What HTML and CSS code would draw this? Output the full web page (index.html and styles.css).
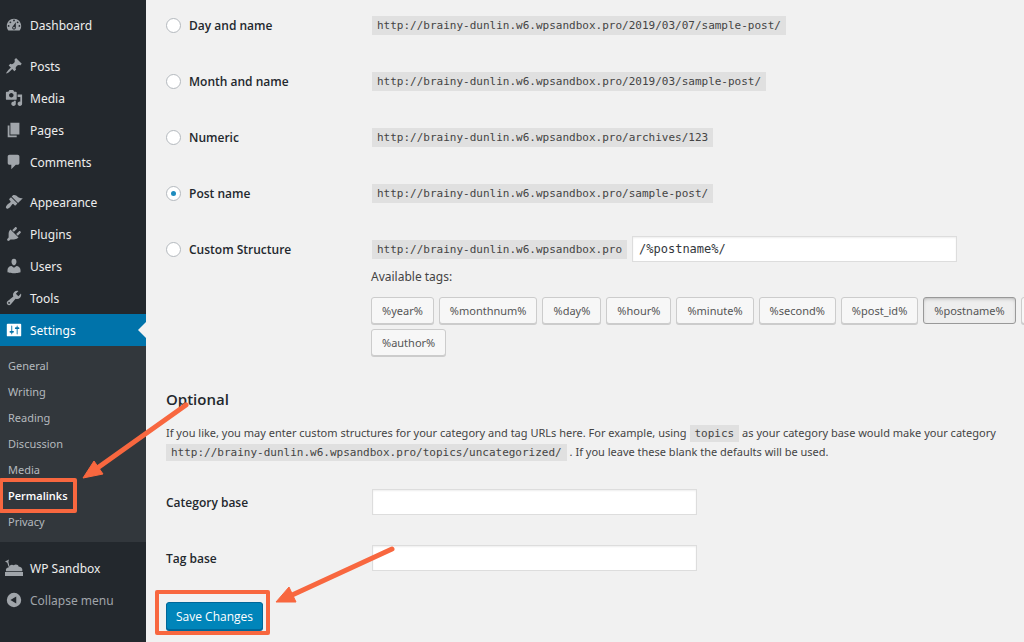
FILE: index.html
```html
<!DOCTYPE html>
<html lang="en">
<head>
<meta charset="utf-8">
<meta name="viewport" content="width=device-width, initial-scale=1">
<title>Permalink Settings</title>
<link rel="stylesheet" href="styles.css">
</head>
<body>
<div class="page">
  <nav class="sidebar" aria-label="Main menu">
    <ul class="menu">
      <li><a class="item" href="#"><svg class="icon" viewBox="0 0 20 20"><path fill-rule="evenodd" d="M3.76 16h12.48c1.1-1.37 1.76-3.11 1.76-5 0-4.42-3.58-8-8-8s-8 3.58-8 8c0 1.89.66 3.63 1.76 5zM10 4c.55 0 1 .45 1 1s-.45 1-1 1-1-.45-1-1 .45-1 1-1zM6 6c.55 0 1 .45 1 1s-.45 1-1 1-1-.45-1-1 .45-1 1-1zm8 0c.55 0 1 .45 1 1s-.45 1-1 1-1-.45-1-1 .45-1 1-1zm-5.37 5.55L12 7v6c0 1.1-.9 2-2 2s-2-.9-2-2c0-.57.24-1.08.63-1.45zM4 10c.55 0 1 .45 1 1s-.45 1-1 1-1-.45-1-1 .45-1 1-1zm12 0c.55 0 1 .45 1 1s-.45 1-1 1-1-.45-1-1 .45-1 1-1zm-5 3c0-.55-.45-1-1-1s-1 .45-1 1 .45 1 1 1 1-.45 1-1z"/></svg>Dashboard</a></li>
    </ul>
    <ul class="menu">
      <li><a class="item" href="#"><svg class="icon" viewBox="0 0 20 20"><path d="M10.44 3.02l1.82-1.82 6.36 6.35-1.83 1.82c-1.05-.68-2.48-.57-3.41.36l-.75.75c-.92.93-1.04 2.35-.35 3.41l-1.83 1.82-2.41-2.41-2.8 2.79c-.42.42-3.38 2.71-3.8 2.29s1.86-3.39 2.28-3.81l2.79-2.79L4.1 9.36l1.83-1.82c1.05.69 2.48.57 3.4-.36l.75-.75c.93-.92 1.05-2.35.36-3.41z"/></svg>Posts</a></li>
      <li><a class="item" href="#"><svg class="icon" viewBox="0 0 20 20"><path fill-rule="evenodd" d="M13 11V4c0-.55-.45-1-1-1h-1.67L9 1H5L3.67 3H2c-.55 0-1 .45-1 1v7c0 .55.45 1 1 1h10c.55 0 1-.45 1-1zM7 4.5c1.38 0 2.5 1.12 2.5 2.5S8.38 9.5 7 9.5 4.5 8.38 4.5 7 5.62 4.5 7 4.5zM14 6h5v10.5c0 1.38-1.12 2.5-2.5 2.5S14 17.88 14 16.5s1.12-2.5 2.5-2.5c.17 0 .34.02.5.05V9h-3V6zm-4 8.05V13h2v3.5c0 1.38-1.12 2.5-2.5 2.5S7 17.88 7 16.5 8.12 14 9.5 14c.17 0 .34.02.5.05z"/></svg>Media</a></li>
      <li><a class="item" href="#"><svg class="icon" viewBox="0 0 20 20"><path d="M6 15V2h10v13H6zm-1 1h8v2H3V5h2v11z"/></svg>Pages</a></li>
      <li><a class="item" href="#"><svg class="icon" viewBox="0 0 20 20"><path d="M5 2h9c1.1 0 2 .9 2 2v7c0 1.1-.9 2-2 2h-2l-5 5v-5H5c-1.1 0-2-.9-2-2V4c0-1.1.9-2 2-2z"/></svg>Comments</a></li>
    </ul>
    <ul class="menu">
      <li><a class="item" href="#"><svg class="icon" viewBox="0 0 20 20"><path d="M14.48 11.06L7.41 3.99l1.5-1.5c.5-.56 2.3-.47 3.51.32 1.21.8 1.43 1.28 2.91 2.1 1.18.64 2.45 1.26 4.45.85zm-.71.71L6.7 4.7 4.93 6.47c-.39.39-.39 1.02 0 1.41l1.06 1.06c.39.39.39 1.03 0 1.42-.6.6-1.43 1.11-2.21 1.69-.35.26-.7.53-1.01.84C1.43 14.23.4 16.08 1.4 17.07c.99 1 2.84-.03 4.18-1.36.31-.31.58-.66.85-1.02.57-.78 1.08-1.61 1.69-2.21.39-.39 1.02-.39 1.41 0l1.06 1.06c.39.39 1.02.39 1.41 0z"/></svg>Appearance</a></li>
      <li><a class="item" href="#"><svg class="icon" viewBox="0 0 20 20"><path d="M13.11 4.36L9.87 7.6 8 5.73l3.24-3.24c.35-.34 1.05-.2 1.56.32.52.51.66 1.21.31 1.55zm-8 1.77l.91-1.12 9.01 9.01-1.19.84c-.71.71-2.63 1.16-3.82 1.16H6.14L4.9 17.26c-.59.59-1.54.59-2.12 0-.59-.58-.59-1.53 0-2.12l1.24-1.24v-3.88c0-1.13.4-3.19 1.09-3.89zm7.26 3.97l3.24-3.24c.34-.35 1.04-.21 1.55.31.52.51.66 1.21.31 1.55l-3.24 3.25z"/></svg>Plugins</a></li>
      <li><a class="item" href="#"><svg class="icon" viewBox="0 0 20 20"><path d="M10 9.25c-2.27 0-2.73-3.44-2.73-3.44C7 4.02 7.82 2 9.97 2c2.16 0 2.98 2.02 2.71 3.81 0 0-.41 3.44-2.68 3.44zm0 2.57L12.72 10c2.39 0 4.52 2.33 4.52 4.53v2.49s-3.65 1.13-7.24 1.13c-3.65 0-7.24-1.13-7.24-1.13v-2.49c0-2.25 1.94-4.48 4.47-4.48z"/></svg>Users</a></li>
      <li><a class="item" href="#"><svg class="icon" viewBox="0 0 20 20"><path fill-rule="evenodd" d="M16.68 9.77c-1.34 1.34-3.3 1.67-4.95.99l-5.41 6.52c-.99.99-2.59.99-3.58 0s-.99-2.59 0-3.57l6.52-5.42c-.68-1.65-.35-3.61.99-4.95 1.28-1.28 3.12-1.62 4.72-1.06l-2.89 2.89 2.82 2.82 2.86-2.87c.53 1.58.18 3.39-1.08 4.65zM3.81 16.21c.4.39 1.04.39 1.43 0 .4-.4.4-1.04 0-1.43-.39-.4-1.03-.4-1.43 0-.39.39-.39 1.03 0 1.43z"/></svg>Tools</a></li>
      <li><a class="item active" href="#"><svg class="icon" viewBox="0 0 20 20"><path fill-rule="evenodd" d="M18 16V4c0-.55-.45-1-1-1H3c-.55 0-1 .45-1 1v12c0 .55.45 1 1 1h14c.55 0 1-.45 1-1zM8 11h1c.55 0 1 .45 1 1s-.45 1-1 1H8v1.5c0 .28-.22.5-.5.5s-.5-.22-.5-.5V13H6c-.55 0-1-.45-1-1s.45-1 1-1h1V5.5c0-.28.22-.5.5-.5s.5.22.5.5V11zm5-2h-1c-.55 0-1-.45-1-1s.45-1 1-1h1V5.5c0-.28.22-.5.5-.5s.5.22.5.5V7h1c.55 0 1 .45 1 1s-.45 1-1 1h-1v5.5c0 .28-.22.5-.5.5s-.5-.22-.5-.5V9z"/></svg>Settings</a>
        <ul class="submenu">
          <li><a href="#">General</a></li>
          <li><a href="#">Writing</a></li>
          <li><a href="#">Reading</a></li>
          <li><a href="#">Discussion</a></li>
          <li><a href="#">Media</a></li>
          <li><a class="current" href="#">Permalinks</a></li>
          <li><a href="#">Privacy</a></li>
        </ul>
      </li>
    </ul>
    <ul class="menu">
      <li><a class="item" href="#"><svg class="icon" viewBox="0 0 18 18"><path d="M0 13h18v4H0zM1 12.300c-.6-2.200.6-3.800 2.800-4 .6-2.200 3-3.400 5-2 1.800-1.400 4.500-.6 5 1.500 2.500-.2 4.200 2.200 3.400 4.500z"/><path d="M0 2.500L4 .5l-.6 2.200L4.500 7.500l-1 .3-1.200-4z"/></svg>WP Sandbox</a></li>
      <li><button class="item collapse" type="button"><svg class="icon" viewBox="0 0 20 20"><path fill-rule="evenodd" d="M10 2a8 8 0 1 0 0 16 8 8 0 0 0 0-16zM12.500 14L6 10l6.500-4z"/></svg>Collapse menu</button></li>
    </ul>
  </nav>

  <main class="content">
    <form>
      <div class="rows">
        <div class="row"><label class="choice"><input type="radio" name="structure">Day and name</label><div class="value"><code>http://brainy-dunlin.w6.wpsandbox.pro/2019/03/07/sample-post/</code></div></div>
        <div class="row"><label class="choice"><input type="radio" name="structure">Month and name</label><div class="value"><code>http://brainy-dunlin.w6.wpsandbox.pro/2019/03/sample-post/</code></div></div>
        <div class="row"><label class="choice"><input type="radio" name="structure">Numeric</label><div class="value"><code>http://brainy-dunlin.w6.wpsandbox.pro/archives/123</code></div></div>
        <div class="row"><label class="choice"><input type="radio" name="structure" checked>Post name</label><div class="value"><code>http://brainy-dunlin.w6.wpsandbox.pro/sample-post/</code></div></div>
        <div class="row"><label class="choice"><input type="radio" name="structure">Custom Structure</label><div class="value"><code>http://brainy-dunlin.w6.wpsandbox.pro</code><input class="text mono" type="text" value="/%postname%/" aria-label="Custom Structure"></div></div>
      </div>
      <div class="available">
        <p>Available tags:</p>
        <div class="tags">
          <button class="tag" type="button">%year%</button>
          <button class="tag" type="button">%monthnum%</button>
          <button class="tag" type="button">%day%</button>
          <button class="tag" type="button">%hour%</button>
          <button class="tag" type="button">%minute%</button>
          <button class="tag" type="button">%second%</button>
          <button class="tag" type="button">%post_id%</button>
          <button class="tag pressed" type="button">%postname%</button>
          <button class="tag blank" type="button" aria-label="category"></button>
          <button class="tag" type="button">%author%</button>
        </div>
      </div>

      <h2>Optional</h2>
      <p class="intro">If you like, you may enter custom structures for your category and tag URLs here. For example, using <code>topics</code> as your category base would make your category <code>http://brainy-dunlin.w6.wpsandbox.pro/topics/uncategorized/</code> . If you leave these blank the defaults will be used.</p>
      <div class="rows">
        <div class="row"><label class="name" for="category-base">Category base</label><div class="value"><input class="text" type="text" id="category-base"></div></div>
        <div class="row"><label class="name" for="tag-base">Tag base</label><div class="value"><input class="text" type="text" id="tag-base"></div></div>
      </div>
      <div class="submit"><button class="save" type="submit">Save Changes</button></div>
    </form>
  </main>

  <svg class="arrows" viewBox="0 0 400 642" aria-hidden="true">
    <path class="shaft" d="M186 405L96 469M392 549L290 596"/>
    <path class="head" d="M83 478L94 461L103 474ZM276 602L289 587L296 602Z"/>
  </svg>
</div>
</body>
</html>
```
FILE: styles.css
```css
*, *::before, *::after { box-sizing: border-box; }
body {
  margin: 0;
  background: #f1f1f1;
  color: #444;
  font: 12px/19px "Noto Sans", "Open Sans", sans-serif;
}
ul { list-style: none; margin: 0; padding: 0; }
p { margin: 0; }
a { text-decoration: none; }
button, input { font: inherit; margin: 0; }

.page {
  position: relative;
  display: flex;
  min-height: 100vh;
  overflow: hidden;
}

/* Sidebar */
.sidebar {
  flex: 0 0 146px;
  display: flex;
  flex-direction: column;
  gap: 8px;
  padding: 9px 0;
  background: #23282d;
}
.menu:first-child { margin-bottom: 1px; }
.item {
  position: relative;
  display: flex;
  align-items: center;
  gap: 7px;
  width: 100%;
  height: 32px;
  padding: 0 5px;
  border: 0;
  background: none;
  color: #eee;
  text-align: left;
}
.icon { flex: none; width: 18px; height: 18px; fill: #a0a5aa; }
.active { background: #0073aa; color: #fff; }
.active .icon { fill: #fff; }
.active::after {
  content: "";
  position: absolute;
  right: 0;
  top: 8px;
  border: 8px solid transparent;
  border-left-width: 0;
  border-right-color: #f1f1f1;
}
.collapse { color: #a0a5aa; }
.submenu { padding: 7px 0; margin-bottom: 2px; background: #32373c; }
.submenu a {
  position: relative;
  display: block;
  padding: 0 8px;
  color: #b4b9be;
  font-size: 11px;
  line-height: 26px;
}
.submenu .current { color: #fff; font-family: "Open Sans", sans-serif; font-weight: 600; }
.current::after {
  content: "";
  position: absolute;
  left: -1px;
  top: -5px;
  width: 78px;
  height: 35px;
  border: 4px solid #f8673f;
  border-radius: 2px;
}

/* Permalink form */
.content { flex: 1; min-width: 0; padding: 7px 0 7px 20px; }
.rows { display: grid; gap: 20px; }
.row { display: flex; align-items: center; min-height: 36px; }
.choice, .name {
  display: flex;
  align-items: center;
  gap: 8px;
  flex: 0 0 206px;
  color: #23282d;
  font-family: "Open Sans", sans-serif;
  font-weight: 600;
}
.choice input {
  appearance: none;
  display: grid;
  place-items: center;
  width: 15px;
  height: 15px;
  border: 1px solid #b4b9be;
  border-radius: 50%;
  background: #fff;
}
.choice input:checked::before {
  content: "";
  width: 5px;
  height: 5px;
  border-radius: 50%;
  background: #1e8cbe;
}
.value { display: flex; align-items: center; gap: 5px; }
code {
  padding: 3px 5px;
  background: #e0e0e0;
  color: #444;
  font: 11px/13px "DejaVu Sans Mono", monospace;
}
.text {
  width: 325px;
  height: 26px;
  padding: 0 6px;
  border: 1px solid #ddd;
  background: #fff;
  box-shadow: inset 0 1px 2px rgba(0, 0, 0, .07);
  color: #32373c;
}
.mono { font: 12px/18px "DejaVu Sans Mono", monospace; }

.available { padding-left: 205px; }
.tags {
  display: flex;
  flex-wrap: wrap;
  gap: 5px;
  margin: 11px -90px 0 0;
}
.tag {
  height: 27px;
  padding: 0 10px;
  border: 1px solid #ccc;
  border-radius: 3px;
  background: #f7f7f7;
  box-shadow: 0 1px 0 #ccc;
  color: #555;
  font-size: 11px;
}
.pressed {
  border-color: #999;
  background: #eee;
  box-shadow: inset 0 2px 5px -3px rgba(0, 0, 0, .5);
}
.blank { width: 86px; }

h2 {
  margin: 33px 0 14px;
  color: #23282d;
  font: 600 15px/20px "Open Sans", sans-serif;
}
.intro { margin-bottom: 23px; font-size: 11px; }
.intro code { padding: 2px 5px; }
.submit { margin-top: 26px; }
.save {
  position: relative;
  height: 28px;
  padding: 0 9px;
  border: 1px solid #006799;
  border-radius: 3px;
  background: #0085ba;
  box-shadow: 0 1px 0 #006799;
  color: #fff;
  font-family: "Open Sans", sans-serif;
}
.save::after {
  content: "";
  position: absolute;
  inset: -13px -8px -6px -12px;
  border: 4px solid #f8673f;
  border-radius: 2px;
}

/* Callout arrows */
.arrows {
  position: absolute;
  left: 0;
  top: 0;
  width: 400px;
  height: 642px;
  pointer-events: none;
}
.shaft { fill: none; stroke: #f8673f; stroke-width: 5; stroke-linecap: round; }
.head { fill: #f8673f; stroke: #f8673f; stroke-linejoin: round; }
```
